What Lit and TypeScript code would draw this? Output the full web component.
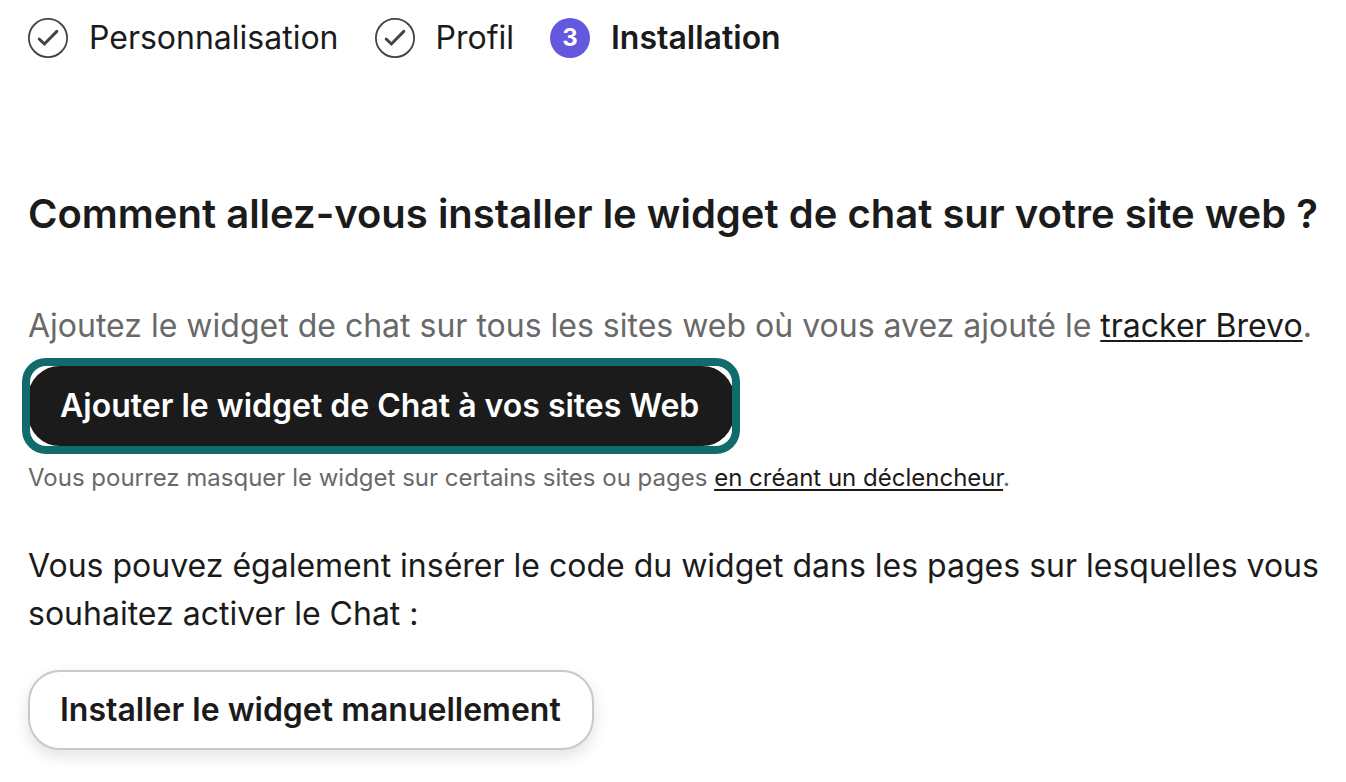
import { LitElement, html, css } from "lit";
import { customElement } from "lit/decorators.js";

@customElement("app-root")
export class AppRoot extends LitElement {
  static styles = css`
    :host {
      display: block;
      box-sizing: border-box;
      min-height: 100vh;
      padding: 14px 20px 32px 28px;
      background: #fff;
      color: #1b1b1b;
      font-family: Inter, "Liberation Sans", sans-serif;
      font-size: 32px;
      line-height: 48px;
    }
    .steps {
      display: flex;
      align-items: center;
      gap: 36px;
      margin: 0;
      padding: 0;
      list-style: none;
    }
    .step {
      display: flex;
      align-items: center;
      gap: 21px;
    }
    .current {
      font-weight: 600;
    }
    .mark {
      width: 40px;
      height: 40px;
      flex: none;
    }
    .number {
      display: grid;
      place-items: center;
      border-radius: 50%;
      background: #6358de;
      color: #fff;
      font-size: 24px;
      font-weight: 700;
      line-height: 40px;
    }
    h1 {
      margin: 124px 0 0;
      font-size: 40px;
      font-weight: 600;
      line-height: 56px;
    }
    p {
      margin: 0;
    }
    .intro {
      margin-top: 60px;
      color: #696969;
    }
    a {
      color: #1b1b1b;
      text-decoration: underline;
      text-decoration-thickness: 2px;
      text-underline-offset: 3px;
    }
    button {
      display: block;
      box-sizing: border-box;
      height: 80px;
      padding: 0 31px 0 30px;
      border: 2px solid #1b1b1b;
      border-radius: 32px;
      font: inherit;
      font-weight: 600;
      cursor: pointer;
    }
    .primary {
      position: relative;
      margin-top: 16px;
      padding-right: 33px;
      background: #1b1b1b;
      color: #fff;
    }
    .primary::after {
      content: "";
      position: absolute;
      inset: -10px -8px;
      border: 8px solid #116b6a;
      border-radius: 24px;
      pointer-events: none;
    }
    .note {
      margin-top: 14px;
      color: #696969;
      font-size: 24px;
      line-height: 36px;
    }
    .manual {
      margin-top: 46px;
    }
    .secondary {
      margin-top: 32px;
      border-color: #c9c9c9;
      background: #fff;
      color: #1b1b1b;
      box-shadow: 0 6px 16px rgba(0, 0, 0, 0.12);
    }
  `;

  private check() {
    return html`<svg class="mark" viewBox="0 0 40 40" fill="none" aria-hidden="true">
      <circle cx="20" cy="20" r="19.1" stroke="#444" stroke-width="1.8" />
      <path d="M11.2 21 L16.4 26 L28.8 13.4" stroke="#444" stroke-width="3" stroke-linecap="round" />
    </svg>`;
  }

  render() {
    return html`
      <ol class="steps">
        <li class="step">${this.check()}<span>Personnalisation</span></li>
        <li class="step">${this.check()}<span>Profil</span></li>
        <li class="step current" aria-current="step"><span class="mark number">3</span><span>Installation</span></li>
      </ol>
      <main>
        <h1>Comment allez-vous installer le widget de chat sur votre site web ?</h1>
        <p class="intro">Ajoutez le widget de chat sur tous les sites web où vous avez ajouté le <a href="#tracker">tracker Brevo</a>.</p>
        <button class="primary" type="button">Ajouter le widget de Chat à vos sites Web</button>
        <p class="note">Vous pourrez masquer le widget sur certains sites ou pages <a href="#trigger">en créant un déclencheur</a>.</p>
        <p class="manual">Vous pouvez également insérer le code du widget dans les pages sur lesquelles vous souhaitez activer le Chat :</p>
        <button class="secondary" type="button">Installer le widget manuellement</button>
      </main>
    `;
  }
}
